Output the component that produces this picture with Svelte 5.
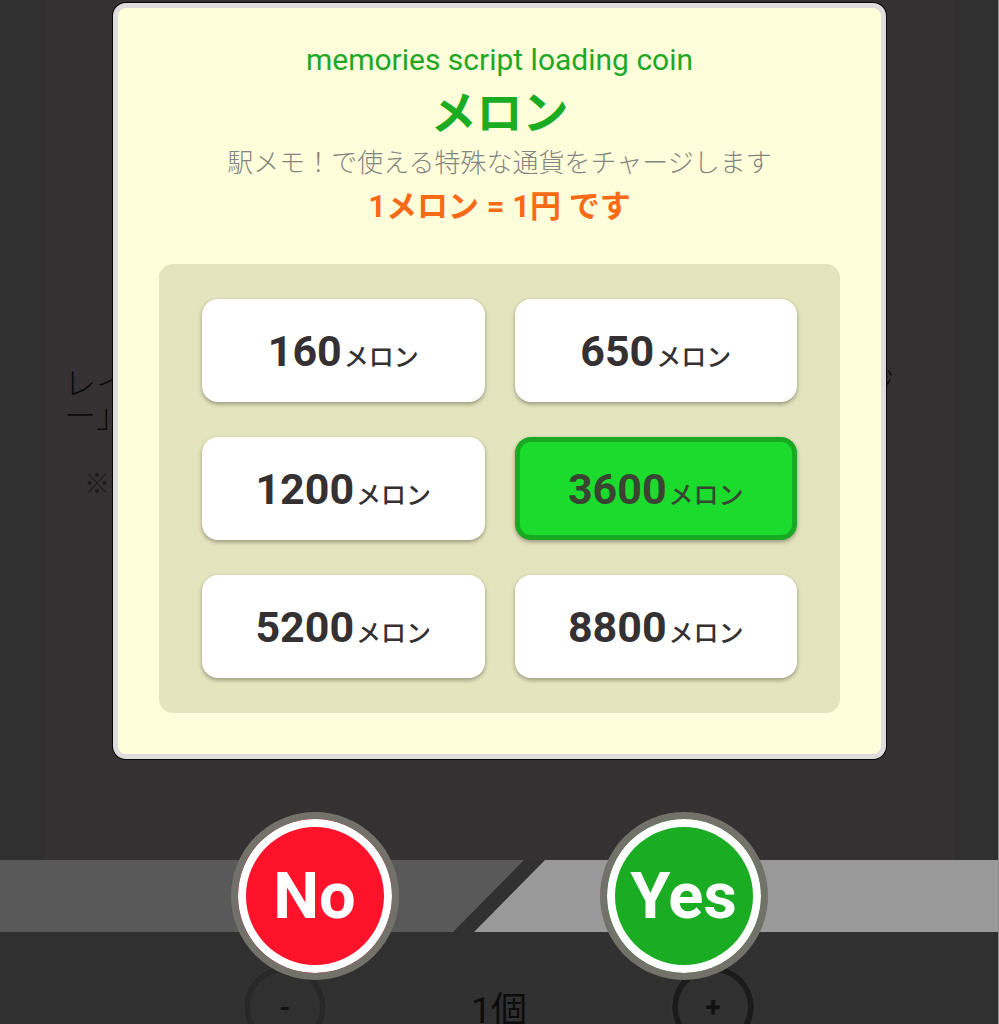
<script lang="ts">
	type Answer = 'no' | 'yes';

	const amounts = [160, 650, 1200, 3600, 5200, 8800];

	let selected = $state(3600);
	let count = $state(1);
	let answer = $state<Answer | null>(null);
</script>

<div class="stage">
	<div class="page" inert>
		<section class="card">
			<p class="line"><span>レイ</span><span>ジ</span></p>
			<p class="line">ー」</p>
			<p class="note">※</p>
		</section>
		<div class="stepper">
			<button class="step" onclick={() => count--}>-</button>
			<span class="count">{count}個</span>
			<button class="step plus" onclick={() => count++}>+</button>
		</div>
	</div>

	<div class="overlay">
		<div class="dialog" role="dialog" aria-labelledby="dialog-title">
			<header>
				<p class="eyebrow">memories script loading coin</p>
				<h1 id="dialog-title">メロン</h1>
				<p class="lead">駅メモ！で使える特殊な通貨をチャージします</p>
				<p class="rate">1メロン = 1円 です</p>
			</header>

			<div class="amounts">
				{#each amounts as amount}
					<button
						class="amount"
						class:selected={amount === selected}
						aria-pressed={amount === selected}
						onclick={() => (selected = amount)}
					>
						{amount}<span class="unit">メロン</span>
					</button>
				{/each}
			</div>
		</div>

		<div class="actions">
			<div class="bands">
				<div class="band left"></div>
				<div class="band right"></div>
			</div>
			<div class="choices">
				<button class="choice no" onclick={() => (answer = 'no')}>No</button>
				<button class="choice yes" onclick={() => (answer = 'yes')}>Yes</button>
			</div>
		</div>
	</div>
</div>

<style>
	:global(body) {
		background: #303030;
	}

	.stage {
		display: grid;
		height: 100vh;
		box-sizing: border-box;
		overflow: hidden;
		border-right: 1px solid #8a8a8a;
		background: #303030;
		font-family: Roboto, 'Noto Sans CJK JP', sans-serif;
	}

	.page,
	.overlay {
		grid-area: 1 / 1;
		min-width: 0;
	}

	p,
	h1 {
		margin: 0;
	}

	button {
		font-family: inherit;
		cursor: pointer;
	}

	/* dimmed shop page */
	.page {
		display: flex;
		flex-direction: column;
		height: 100vh;
		overflow: hidden;
		color: #0c0c0c;
	}

	.card {
		flex: 1;
		margin: 0 41px 0 43px;
		padding: 368px 62px 0 20px;
		border: 1px solid #2d2c2c;
		border-width: 0 1px;
		background: #333132;
	}

	.line {
		display: flex;
		justify-content: space-between;
		font-size: 32px;
		font-weight: 300;
		line-height: 32px;
	}

	.note {
		margin-top: 36px;
		padding-left: 20px;
		font-size: 26px;
		line-height: 32px;
		color: #1a1919;
	}

	.stepper {
		display: flex;
		justify-content: center;
		gap: 145px;
		height: 58px;
		padding-top: 106px;
	}

	.step {
		flex: none;
		width: 82px;
		height: 82px;
		border: 6px solid #282828;
		border-radius: 50%;
		outline: 1px solid #363636;
		background: #303030;
		color: #111;
		font-size: 28px;
		font-weight: 700;
	}

	.step.plus {
		border-color: #1b1b1b;
	}

	.count {
		padding-top: 20px;
		font-size: 36px;
		line-height: 50px;
	}

	/* dialog */
	.overlay {
		display: flex;
		flex-direction: column;
		gap: 53px;
		padding-top: 3px;
	}

	.dialog {
		margin: 0 112px 0 113px;
		padding: 34px 41px 41px;
		border: 5px solid #dedcdd;
		border-radius: 13px;
		background: #fefedb;
		box-shadow: 0 0 0 1px #080808;
	}

	header {
		display: flex;
		flex-direction: column;
		align-items: center;
		padding-bottom: 28px;
		text-align: center;
	}

	.eyebrow {
		font-size: 30px;
		line-height: 36px;
		color: #1fa826;
	}

	h1 {
		font-size: 46px;
		font-weight: 700;
		line-height: 70px;
		color: #1aac22;
	}

	.lead {
		font-size: 26px;
		font-weight: 300;
		line-height: 30px;
		color: #858580;
	}

	.rate {
		font-size: 31px;
		font-weight: 700;
		line-height: 58px;
		color: #f96a14;
	}

	.amounts {
		display: grid;
		grid-template-columns: 1fr 1fr;
		gap: 35px 30px;
		padding: 35px 43px;
		border-radius: 14px;
		background: #e4e4be;
	}

	.amount {
		height: 103px;
		padding: 0;
		border: 5px solid #fff;
		border-radius: 16px;
		background: #fff;
		box-shadow: 0 2px 4px rgba(0, 0, 0, 0.35);
		color: #353132;
		font-size: 43px;
		font-weight: 700;
	}

	.amount.selected {
		border-color: #19a922;
		background: #1bdc2c;
		color: #3a4432;
	}

	.unit {
		margin-left: 2px;
		font-size: 25px;
		font-weight: 500;
	}

	/* answer buttons on their diagonal band */
	.actions {
		display: grid;
		align-items: center;
	}

	.bands,
	.choices {
		grid-area: 1 / 1;
		display: flex;
	}

	.band {
		flex: none;
		width: calc(50% + 25px);
		height: 72px;
	}

	.band.left {
		background: #595959;
		clip-path: polygon(0 0, 100% 0, calc(100% - 71px) 100%, 0 100%);
	}

	.band.right {
		margin-left: -50px;
		background: #999;
		clip-path: polygon(71px 0, 100% 0, 100% 100%, 0 100%);
	}

	.choices {
		position: relative;
		justify-content: center;
		gap: 201px;
	}

	.choice {
		width: 168px;
		height: 168px;
		padding: 0;
		border: 7px solid #72726b;
		border-radius: 50%;
		box-shadow: inset 0 0 0 8px #fff;
		color: #fff;
		font-size: 65px;
		font-weight: 700;
	}

	.no {
		background: #ff132b;
	}

	.yes {
		background: #1aac22;
	}
</style>
